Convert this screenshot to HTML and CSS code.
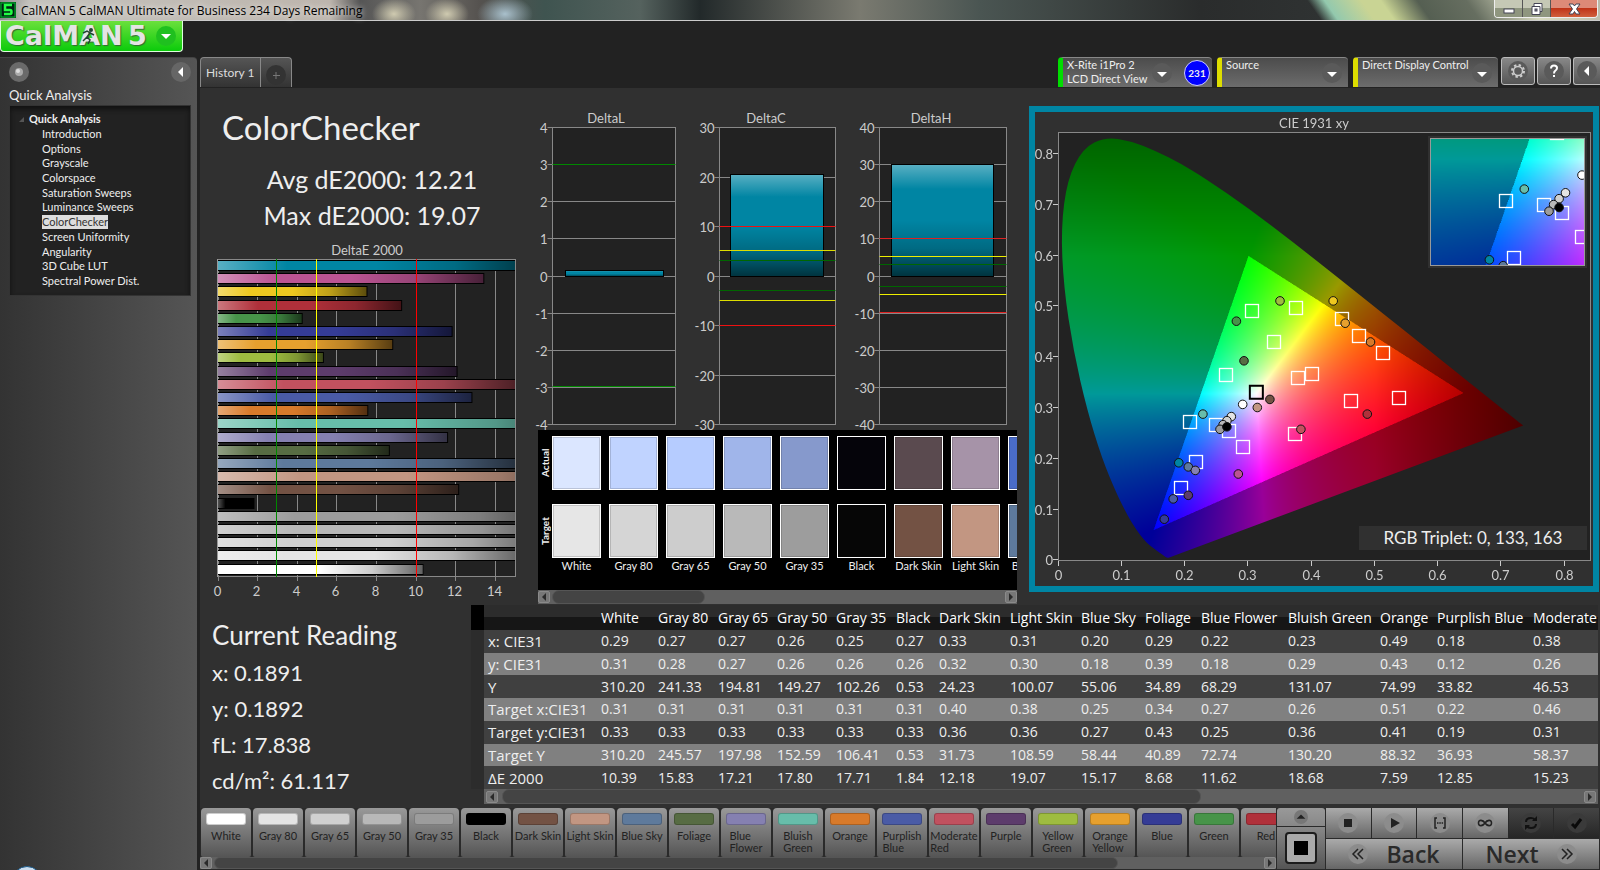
FILE: index.html
```html
<!DOCTYPE html>
<html lang="en">

<head>
    <meta charset="UTF-8">
    <meta name="viewport" content="width=device-width, initial-scale=1.0">
    <title>CalMAN 5</title>
    <link rel="stylesheet" href="styles.css">
</head>

<body>
    <header class="titlebar">
        <svg class="appicon" viewBox="0 0 16 16">
            <rect width="16" height="16" fill="#041" />
            <rect x="1" y="1" width="14" height="14" fill="#021" stroke="#0b3" />
            <path d="M12 3H5v5h5q1.500 0 1.500 2t-1.500 2H4" fill="none" stroke="#2f4" stroke-width="2.500" />
        </svg>
        <span class="caption">CalMAN 5 CalMAN Ultimate for Business 234 Days Remaining</span>
        <div class="winbtns">
            <button aria-label="Minimize"><svg viewBox="0 0 16 14"><rect x="3" y="7" width="10" height="4" fill="#fff" stroke="#445" /></svg></button>
            <button aria-label="Restore"><svg viewBox="0 0 16 14"><path d="M5 1.500h8v8h-2v3H3v-8h2z" fill="#fff" stroke="#445" /><rect x="6" y="7" width="2" height="2" fill="#889" stroke="#445" /><path d="M5 4.500h6v5" fill="none" stroke="#445" /></svg></button>
            <button class="close" aria-label="Close"><svg viewBox="0 0 16 14"><path d="M3 2h4l1.500 2L10 2h4l-3.500 5L14 12h-4L8.500 9.500 7 12H3l3.500-5z" fill="#fff" stroke="#445" /></svg></button>
        </div>
    </header>

    <div class="shell">
        <div class="left">
            <button class="brand">
                <svg class="logo" viewBox="0 0 150 30">
                    <text x="4" y="24">CalMAN</text>
                    <text x="127" y="24">5</text>
                    <!-- running man over the A -->
                    <circle cx="90" cy="9" r="2" fill="#243" />
                    <path d="M82 12l4-2 3 2-3 4 3 3-2 4M86 16l-4 4M89 12l4 2" fill="none" stroke="#243" stroke-width="1.500" />
                </svg>
                <svg class="round" viewBox="0 0 20 20"><circle cx="10" cy="10" r="10" fill="#1fc01f" /><path d="M5 8h10l-5 5z" fill="#fff" /></svg>
            </button>
            <aside class="sidebar">
                <div class="sidetop">
                    <svg viewBox="0 0 20 20"><circle cx="10" cy="10" r="10" fill="#6a6a6a" /><circle cx="10" cy="10" r="4" fill="#aaa" /><circle cx="9" cy="9" r="2" fill="#ddd" /></svg>
                    <button aria-label="Collapse"><svg viewBox="0 0 20 20"><circle cx="10" cy="10" r="10" fill="#666" /><path d="M12 5v10l-5-5z" fill="#fff" /></svg></button>
                </div>
                <h2>Quick Analysis</h2>
                <nav class="tree">
                    <div class="treehead"><svg viewBox="0 0 6 6"><path d="M6 0v6H0z" fill="#555" /></svg>Quick Analysis</div>
                    <ul>
                        <li><a href="#">Introduction</a></li>
                        <li><a href="#">Options</a></li>
                        <li><a href="#">Grayscale</a></li>
                        <li><a href="#">Colorspace</a></li>
                        <li><a href="#">Saturation Sweeps</a></li>
                        <li><a href="#">Luminance Sweeps</a></li>
                        <li><a href="#" class="on">ColorChecker</a></li>
                        <li><a href="#">Screen Uniformity</a></li>
                        <li><a href="#">Angularity</a></li>
                        <li><a href="#">3D Cube LUT</a></li>
                        <li><a href="#">Spectral Power Dist.</a></li>
                    </ul>
                </nav>
                <div class="orb"></div>
            </aside>
        </div>

        <div class="right">
            <div class="topbar">
                <div class="tabs">
                    <button class="tab">History 1</button>
                    <button class="tab add" aria-label="Add tab"><svg viewBox="0 0 20 20"><circle cx="10" cy="10" r="10" fill="#333" /><path d="M10 7v7M7 10.500h7" stroke="#777" /></svg></button>
                </div>
                <div class="devices">
                    <button class="device meter">
                        <span>X-Rite i1Pro 2<br>LCD Direct View</span>
                        <svg class="drop" viewBox="0 0 20 20"><circle cx="10" cy="10" r="10" fill="#5a5a5a" /><path d="M5 9h10l-5 5z" fill="#fff" /></svg>
                        <b class="count">231</b>
                    </button>
                    <button class="device source">
                        <span>Source</span>
                        <svg class="drop" viewBox="0 0 20 20"><circle cx="10" cy="10" r="10" fill="#5a5a5a" /><path d="M5 9h10l-5 5z" fill="#fff" /></svg>
                    </button>
                    <button class="device display">
                        <span>Direct Display Control</span>
                        <svg class="drop" viewBox="0 0 20 20"><circle cx="10" cy="10" r="10" fill="#5a5a5a" /><path d="M5 9h10l-5 5z" fill="#fff" /></svg>
                    </button>
                    <button class="tool" aria-label="Settings"><svg viewBox="0 0 20 20"><circle cx="10" cy="10" r="10" fill="#5a5a5a" /><circle cx="10" cy="10" r="4.500" fill="none" stroke="#ccc" stroke-width="1.500" /><circle cx="10" cy="10" r="6" fill="none" stroke="#ccc" stroke-width="2" stroke-dasharray="2.400 2.300" /></svg></button>
                    <button class="tool" aria-label="Help"><svg viewBox="0 0 20 20"><circle cx="10" cy="10" r="10" fill="#5a5a5a" /><path d="M7 7.500q0-3 3-3t3 2.500q0 1.500-1.500 2.500T10 12.500" fill="none" stroke="#fff" stroke-width="2" /><rect x="9" y="14" width="2" height="2" fill="#fff" /></svg></button>
                    <button class="tool cut" aria-label="Collapse right"><svg viewBox="0 0 20 20"><circle cx="10" cy="10" r="10" fill="#5a5a5a" /><path d="M12 5v10l-5-5z" fill="#fff" /></svg></button>
                </div>
            </div>

            <main class="workspace">
                <section class="upper">
                    <div class="summary">
                        <h1>ColorChecker</h1>
                        <p class="avg">Avg dE2000: 12.21<br>Max dE2000: 19.07</p>
                        <svg id="deltaE" viewBox="0 0 330 365"></svg>
                    </div>
                    <div class="middle">
                        <svg id="deltas" viewBox="0 0 499 330"></svg>
                        <div class="compare">
                            <div class="sides"><span>Actual</span><span>Target</span></div>
                            <div class="swatches" id="swatches"></div>
                        </div>
                        <div class="scroll swscroll"><button aria-label="Left"></button><i></i><button class="next" aria-label="Right"></button></div>
                    </div>
                    <div class="cie">
                        <canvas id="gamut" width="558" height="474"></canvas>
                        <svg id="ciexy" viewBox="0 0 558 474"></svg>
                    </div>
                </section>

                <section class="lower">
                    <div class="reading">
                        <h3>Current Reading</h3>
                        <p>x: 0.1891</p>
                        <p>y: 0.1892</p>
                        <p>fL: 17.838</p>
                        <p>cd/m²: 61.117</p>
                    </div>
                    <div class="data">
                        <div class="tablewrap">
                            <table id="values"></table>
                        </div>
                        <div class="scroll tbscroll"><button aria-label="Left"></button><i></i><button class="next" aria-label="Right"></button></div>
                    </div>
                </section>
            </main>

            <footer class="bottombar">
                <div class="patterns">
                    <div class="patternlist" id="patterns"></div>
                    <div class="scroll ptscroll"><button aria-label="Left"></button><i></i><button class="next" aria-label="Right"></button></div>
                </div>
                <div class="window">
                    <button aria-label="Expand"><svg viewBox="0 0 16 16"><circle cx="8" cy="8" r="8" fill="#777" /><path d="M3 10h10L8 5z" fill="#222" /></svg></button>
                    <button class="big" aria-label="Pattern window"><svg viewBox="0 0 32 32"><rect x="1" y="1" width="30" height="30" rx="3" fill="#aaa" stroke="#1c1c1c" stroke-width="2" /><rect x="9" y="9" width="14" height="14" fill="#000" /></svg></button>
                </div>
                <div class="controls">
                    <div class="ctlrow">
                        <button aria-label="Stop"><svg viewBox="0 0 20 20"><circle cx="10" cy="10" r="10" /><path d="M6 6h8v8H6z" fill="#222" /></svg></button>
                        <button aria-label="Play"><svg viewBox="0 0 20 20"><circle cx="10" cy="10" r="10" /><path d="M7 5l9 5-9 5z" fill="#222" /></svg></button>
                        <button aria-label="Read series"><svg viewBox="0 0 20 20"><circle cx="10" cy="10" r="10" /><path d="M7 5H5v10h2M13 5h2v10h-2M7 10h1.500M9.300 10h1.500M11.600 10h1.500" fill="none" stroke="#222" stroke-width="1.500" /></svg></button>
                        <button aria-label="Continuous"><svg viewBox="0 0 20 20"><circle cx="10" cy="10" r="10" /><path d="M10 10C8 7 3.500 6 3.500 10S8 13 10 10s6.500-4 6.500 0-4.500 3-6.500 0z" fill="none" stroke="#222" stroke-width="1.600" /></svg></button>
                        <button class="off" aria-label="Refresh" disabled><svg viewBox="0 0 20 20"><circle cx="10" cy="10" r="10" /><path d="M5 9q0-4 5-4 3 0 4 2M15 11q0 4-5 4-3 0-4-2" fill="none" stroke="#111" stroke-width="2" /><path d="M16 3v5h-5zM4 17v-5h5z" fill="#111" /></svg></button>
                        <button class="off" aria-label="Accept" disabled><svg viewBox="0 0 20 20"><circle cx="10" cy="10" r="10" /><path d="M5 11l3 3 6-8" fill="none" stroke="#0a0a0a" stroke-width="3" /></svg></button>
                    </div>
                    <div class="ctlrow nav">
                        <button><svg viewBox="0 0 20 20"><circle cx="10" cy="10" r="10" /><path d="M10 5l-5 5 5 5M15 5l-5 5 5 5" fill="none" stroke="#222" stroke-width="1.500" /></svg>Back</button>
                        <button>Next<svg viewBox="0 0 20 20"><circle cx="10" cy="10" r="10" /><path d="M5 5l5 5-5 5M10 5l5 5-5 5" fill="none" stroke="#222" stroke-width="1.500" /></svg></button>
                    </div>
                </div>
            </footer>
        </div>
    </div>
    <script src="script.js"></script>
</body>

</html>
```
FILE: styles.css
```css
/* reset */
html,
body {
    width: 100%;
    height: 100%
}

body,
p,
h1,
h2,
h3,
ul,
table,
th,
td,
button {
    margin: 0;
    padding: 0
}

* {
    box-sizing: border-box;
}

body {
    display: flex;
    flex-direction: column;
    overflow: hidden;
    background: #222;
    color: #eee;
}

body,
button {
    font-family: Lato, "Open Sans", sans-serif;
    font-size: 12px;
}

button {
    border: 0;
    color: inherit;
    display: flex;
    align-items: center;
    justify-content: center;
}

h1,
h2,
h3 {
    font-weight: normal;
}

ul {
    list-style: none
}

a {
    color: inherit;
    text-decoration: none
}

svg,
canvas {
    display: block;
}

/* window title */
.titlebar {
    flex: none;
    display: flex;
    align-items: center;
    height: 21px;
    border-bottom: 1px solid #ccc;
    background:
        radial-gradient(ellipse 22px 16px at 394px 14px, #cfcab0, transparent),
        radial-gradient(ellipse 22px 16px at 447px 14px, #cfcab0, transparent),
        radial-gradient(ellipse 28px 18px at 505px 14px, #a9c0cc, transparent),
        linear-gradient(55deg, transparent 0 calc(100% - 240px), #93c9ae calc(100% - 226px), #c9d494 calc(100% - 196px), #c9d494 calc(100% - 180px), #555f52 calc(100% - 150px), #666e60 calc(100% - 110px), #d8dac0 calc(100% - 60px), #b8b8a8 100%),
        linear-gradient(90deg, #888 0, #c4c2bc 30px, #bdb5ad 330px, #555 360px, #777570 420px, #55524f 480px, #3f5450 545px, #55625e 640px, #22292a 700px, #7a7a70 860px, #4a5552 980px, #2a2c2c 1200px, #3a4040 100%);
}

.appicon {
    width: 16px;
    height: 16px;
}

.caption {
    flex: 1;
    padding-left: 5px;
    color: #000;
    font-family: "Open Sans", sans-serif;
    font-size: 12px;
    text-shadow: 0 0 6px #fff;
}

.winbtns {
    display: flex;
    align-self: flex-start;
    height: 18px;
    margin-right: 2px;
    border: 1px solid #eee;
    border-top: 0;
    border-radius: 0 0 4px 4px;
    overflow: hidden;
}

.winbtns button {
    width: 28px;
    border-right: 1px solid #555;
    background: linear-gradient(#c5c8b5 50%, #8f967f 50%);
}

.winbtns .close {
    width: 46px;
    border: 0;
    background: linear-gradient(#dd8a78 45%, #c03418 50%, #d0603c);
}

.winbtns svg {
    width: 16px;
    height: 14px;
}

.shell {
    flex: 1;
    display: flex;
    min-height: 0;
}

/* left side */
.left {
    flex: none;
    display: flex;
    flex-direction: column;
    width: 200px;
}

.brand {
    width: 183px;
    height: 31px;
    margin-bottom: 5px;
    justify-content: flex-start;
    gap: 5px;
    border: 1px solid #dfd;
    border-top: 0;
    border-radius: 0 0 4px 4px;
    background: linear-gradient(#6be03c, #0bcb0b);
}

.logo {
    width: 150px;
    height: 30px;
    fill: #e4e4e4;
    font-family: "DejaVu Sans", sans-serif;
    font-size: 27px;
    font-weight: bold;
    text-shadow: 1px 1px 1px #363;
}

.round,
.drop,
.sidetop svg,
.add svg,
.tool svg {
    flex: none;
    width: 20px;
    height: 20px;
}

.sidebar {
    flex: 1;
    display: flex;
    flex-direction: column;
    width: 197px;
    padding: 4px 6px 0 9px;
    border-top: 1px solid #444;
    border-radius: 0 4px 0 0;
    background: linear-gradient(90deg, #333, #555);
    overflow: hidden;
}

.sidetop {
    display: flex;
    justify-content: space-between;
}

.sidetop button {
    background: none;
}

.sidebar h2 {
    margin: 6px 0 3px;
    font-size: 13px;
    line-height: 14px;
}

.tree {
    padding: 5px 0 7px 9px;
    border: 1px solid #333;
    background: #222;
    box-shadow: inset 0 3px 5px #111;
}

.treehead {
    display: flex;
    align-items: center;
    gap: 5px;
    font-size: 11px;
    font-weight: bold;
    line-height: 16px;
}

.treehead svg {
    width: 5px;
    height: 5px;
}

.tree ul {
    display: flex;
    flex-direction: column;
    justify-content: space-between;
    height: 161px;
    padding-left: 23px;
    font-size: 11px;
    line-height: 14px;
}

.tree a {
    display: inline-block;
}

.tree .on {
    color: #333;
    background: #ddd;
}

.orb {
    width: 30px;
    height: 30px;
    margin: auto 0 -26px 3px;
    flex: none;
    border: 1px solid #1a5a8a;
    border-radius: 50%;
    background: #cde;
}

.right {
    flex: 1;
    display: flex;
    flex-direction: column;
    min-width: 0;
}

/* tabs and device menus */
.topbar {
    flex: none;
    display: flex;
    justify-content: space-between;
    align-items: flex-end;
    height: 67px;
    padding-bottom: 1px;
}

.tabs,
.devices {
    display: flex;
}

.tab {
    height: 30px;
    padding: 0 5px;
    border: 1px solid #888;
    border-bottom: 0;
    border-radius: 4px 0 0 0;
    color: #ddd;
    font-size: 12px;
    background: linear-gradient(#555, #333);
}

.tab.add {
    padding: 4px 5px 0;
    border-left: 0;
    border-radius: 0 4px 0 0;
}

.devices {
    gap: 5px;
}

.device {
    height: 30px;
    padding: 0 6px 0 4px;
    border-top: 1px solid #888;
    border-left: 5px solid #dd0;
    border-radius: 4px 4px 0 0;
    justify-content: space-between;
    font-size: 11px;
    line-height: 14px;
    text-align: left;
    background: linear-gradient(#4c4c4c, #6c6c6c);
}

.device span {
    align-self: flex-start;
    white-space: nowrap;
}

.meter {
    width: 154px;
    padding-right: 2px;
    border-left-color: #0d0;
}

.source {
    width: 131px;
}

.display {
    width: 145px;
    margin-right: -2px;
}

.count {
    width: 26px;
    height: 26px;
    margin-left: 8px;
    border: 1px solid #ccf;
    border-radius: 50%;
    background: #00f;
    font-size: 10px;
    line-height: 24px;
    text-align: center;
}

.tool {
    width: 34px;
    height: 28px;
    margin-right: -3px;
    border: 1px solid #bbb;
    border-radius: 3px;
    background: linear-gradient(#888, #555);
}

.tool.cut {
    width: 27px;
    margin-right: 0;
    border-right: 0;
    border-radius: 3px 0 0 3px;
}

/* workspace */
.workspace {
    flex: 1;
    min-height: 0;
    padding-bottom: 3px;
    background: #303030;
    overflow: hidden;
}

.upper {
    display: grid;
    grid-template-columns: minmax(0, 330fr) minmax(0, 499fr) minmax(0, 571fr);
    align-items: start;
    height: 517px;
}

.summary h1 {
    padding: 18px 0 0 22px;
    font-size: 33px;
    line-height: 42px;
}

.avg {
    padding: 13px 0 7px 14px;
    font-size: 25px;
    line-height: 36px;
    text-align: center;
}

.middle {
    padding-top: 12px;
}

.upper svg {
    width: 100%;
    overflow: visible;
}

.lbl {
    fill: #ccc;
    font-size: 13px;
}

.mid {
    text-anchor: middle;
}

.end {
    text-anchor: end;
}

.plot {
    fill: #222;
    stroke: #888;
}

.compare {
    display: flex;
    height: 160px;
    margin: 0 12px 0 8px;
    background: #000;
}

.sides {
    flex: none;
    display: flex;
    flex-direction: column;
    width: 14px;
    padding-top: 6px;
    gap: 14px;
    font-size: 10px;
    font-weight: bold;
}

.sides span {
    height: 54px;
    line-height: 14px;
    text-align: center;
    writing-mode: vertical-rl;
    transform: rotate(180deg);
}

.swatches {
    flex: 1;
    display: flex;
    gap: 8px;
    padding-top: 6px;
    overflow: hidden;
}

.swatch {
    flex: none;
    width: 49px;
    font-size: 11px;
    line-height: 14px;
    text-align: center;
    white-space: nowrap;
}

.swatch i {
    display: block;
    height: 54px;
    margin-bottom: 14px;
    border: 1px solid #fff;
    box-shadow: inset 0 0 0 1px rgba(0, 0, 0, 0.150);
}

.swatch i+i {
    margin-bottom: 1px;
}

/* scroll bars */
.scroll {
    display: flex;
    align-items: center;
    justify-content: space-between;
    background: #606060;
}

.scroll button {
    flex: none;
    width: 12px;
    height: 12px;
    border: 1px solid #8a8a8a;
    border-radius: 2px;
    background: #777;
}

.scroll button::before {
    content: "";
    border: 4px solid transparent;
    border-left-width: 0;
    border-right-color: #2a2a2a;
}

.scroll .next::before {
    border-left-width: 4px;
    border-right-width: 0;
    border-left-color: #2a2a2a;
}

.scroll i {
    height: 100%;
    margin: 0 auto 0 2px;
    border: 1px solid #555;
    border-radius: 7px;
    background: #444;
}

.swscroll {
    height: 14px;
    margin: 0 12px 0 8px;
}

.swscroll i {
    width: 32%;
}

.tbscroll {
    height: 15px;
    margin-left: 13px;
    padding: 0 2px;
}

.tbscroll i {
    width: 63%;
    margin-left: 4px;
}

.ptscroll {
    height: 12px;
}

.ptscroll i {
    width: 84%;
}

/* CIE diagram */
.cie {
    display: grid;
    margin: 18px 1px 0 0;
    border: 6px solid #0085a3;
}

.cie canvas,
.cie svg {
    grid-area: 1 / 1;
    width: 100%;
}

.triplet {
    fill: #eee;
    font-size: 17px;
    text-anchor: middle;
}

/* reading and table */
.lower {
    display: flex;
}

.reading {
    flex: none;
    width: 271px;
    padding: 12px 0 0 12px;
    font-size: 22px;
    line-height: 36px;
}

.reading h3 {
    padding-bottom: 2px;
    font-size: 26px;
}

.data {
    flex: 1;
    min-width: 0;
    margin-right: 2px;
}

.tablewrap {
    overflow: hidden;
}

table {
    width: 1158px;
    height: 184px;
    table-layout: fixed;
    border-collapse: collapse;
    font-family: "Open Sans", sans-serif;
    font-size: 14px;
    line-height: 18px;
}

th,
td {
    padding: 0 0 0 4px;
    font-weight: normal;
    text-align: left;
    white-space: nowrap;
}

thead tr {
    height: 25px;
    background: linear-gradient(#2c2c2c 50%, #161616 50%);
}

thead th {
    color: #fff;
}

thead th:first-child {
    background: #000;
}

tbody tr {
    background: #404040;
}

tbody th {
    font-size: 15px;
}

tbody tr:nth-child(even) {
    background: #808080;
}

tbody td:first-child {
    background: #2c2c2c;
}

/* bottom bar */
.bottombar {
    flex: none;
    display: flex;
    gap: 1px;
    height: 62px;
    padding-bottom: 1px;
    background: #2a2a2a;
}

.patterns {
    flex: 1;
    min-width: 0;
}

.patternlist {
    display: flex;
    gap: 2px;
    padding-left: 1px;
    overflow: hidden;
}

.pattern {
    flex: none;
    flex-direction: column;
    justify-content: flex-start;
    width: 50px;
    height: 49px;
    padding-top: 5px;
    border-radius: 4px 4px 2px 2px;
    color: #222;
    font-size: 11px;
    line-height: 12px;
    text-align: left;
    background: linear-gradient(#999, #555);
}

.pattern i {
    width: 40px;
    height: 12px;
    margin-bottom: 5px;
    border: 1px solid rgba(0, 0, 0, 0.200);
    border-radius: 3px;
}

.window {
    flex: none;
    display: flex;
    flex-direction: column;
    gap: 1px;
    width: 48px;
}

.window button {
    height: 18px;
    border-radius: 3px 3px 0 0;
    background: linear-gradient(#999, #888);
}

.window .big {
    flex: 1;
    border-radius: 0;
    background: linear-gradient(#888, #555);
}

.window svg {
    width: 14px;
}

.window .big svg {
    width: 32px;
}

.controls {
    flex: none;
    display: flex;
    flex-direction: column;
    gap: 1px;
    width: 274px;
    padding-right: 1px;
}

.ctlrow {
    flex: 1;
    display: flex;
    gap: 1px;
}

.ctlrow button {
    flex: 1;
    background: linear-gradient(#aaa, #666);
}

.ctlrow .off {
    background: linear-gradient(#444, #262626);
}

.ctlrow svg {
    width: 20px;
    height: 20px;
    fill: #8c8c8c;
}

.ctlrow .off svg {
    fill: #3a3a3a;
}

.ctlrow.nav button {
    gap: 18px;
    color: #2a2a2a;
    font-family: "Open Sans", sans-serif;
    font-size: 23px;
    font-weight: 600;
    line-height: 28px;
}
```
FILE: script.js
```javascript
var names = ['White', 'Gray 80', 'Gray 65', 'Gray 50', 'Gray 35', 'Black', 'Dark Skin', 'Light Skin', 'Blue Sky',
    'Foliage', 'Blue Flower', 'Bluish Green', 'Orange', 'Purplish Blue', 'Moderate Red', 'Purple', 'Yellow Green',
    'Orange Yellow', 'Blue', 'Green', 'Red', 'Yellow', 'Magenta', 'Cyan'];
var colors = ['#ffffff', '#e4e4e4', '#d0d0d0', '#b8b8b8', '#9c9c9c', '#000000', '#735244', '#c29682', '#5e7a9c',
    '#576c43', '#8580b1', '#67bdaa', '#d87a2a', '#4a5ba6', '#c1515f', '#5d3c6c', '#9ebc40',
    '#e6a02e', '#353c96', '#479449', '#b0303a', '#eec820', '#bb5493', '#0085a3'];
var errors = [10.39, 15.83, 17.21, 17.8, 17.71, 1.84, 12.18, 19.07, 15.17, 8.68, 11.62, 18.68, 7.59, 12.85, 15.23,
    12.1, 5.35, 8.85, 11.85, 4.28, 9.3, 7.55, 13.45, 16];

function line(x1, y1, x2, y2, color) {
    return '<path d="M' + x1 + ' ' + y1 + 'L' + x2 + ' ' + y2 + '" stroke="' + color + '"/>';
}

function text(x, y, str, cls) {
    return '<text x="' + x + '" y="' + y + '" class="' + cls + '">' + str + '</text>';
}

function box(x, y, w, h, attrs) {
    return '<rect x="' + x + '" y="' + y + '" width="' + w + '" height="' + h + '" ' + attrs + '/>';
}

// glossy overlay, horizontal or vertical
function gloss(id, dir) {
    return '<linearGradient id="' + id + '" x1="0" y1="0" ' + dir + '>' +
        '<stop offset="0" stop-color="#fff" stop-opacity=".35"/><stop offset=".22" stop-color="#fff" stop-opacity="0"/>' +
        '<stop offset=".5" stop-color="#000" stop-opacity="0"/><stop offset=".75" stop-color="#000" stop-opacity=".2"/>' +
        '<stop offset="1" stop-color="#000" stop-opacity=".62"/></linearGradient>';
}

// DeltaE 2000 bars
function drawDeltaE() {
    var x0 = 17.5, unit = 19.8, out = gloss('glossH', 'x2="1" y2="0"');
    out += '<clipPath id="deClip"><rect x="17" y="19" width="298" height="318"/></clipPath>';
    out += text(167, 15, 'DeltaE 2000', 'lbl mid') + box(17.5, 19.5, 298, 317, 'class="plot"');
    for (var t = 0; t <= 14; t += 2) {
        var x = Math.round(x0 + t * unit) + 0.5;
        out += line(x, 19, x, 341, '#888') + text(x - 1, 356, t, 'lbl mid');
    }
    out += '<g clip-path="url(#deClip)">';
    for (var i = 0; i < 24; i++) {
        var y = Math.round(20 + i * 13.2) + 0.5;
        var w = errors[23 - i] * unit;
        out += box(x0, y, w, 10, 'fill="' + colors[23 - i] + '"') +
            box(x0, y, w, 10, 'fill="url(#glossH)" stroke="#000"');
    }
    out += '</g>' + line(17.5, 19, 17.5, 337, '#999');
    out += line(76.5, 19, 76.5, 337, '#080') + line(116.5, 19, 116.5, 337, '#ff0') + line(216.5, 19, 216.5, 337, '#f00');
    document.getElementById('deltaE').innerHTML = out;
}

// DeltaL, DeltaC, DeltaH
function drawDeltas() {
    var charts = [
        { name: 'DeltaL', x: 22.5, w: 123, max: 4, step: 1, value: 0.17, title: 76, bar: [35, 98], limits: [[3, '#080']] },
        { name: 'DeltaC', x: 189.5, w: 116, max: 30, step: 10, value: 20.6, title: 236, bar: [200, 93], limits: [[3, '#060'], [5, '#dd0'], [10, '#e11']] },
        { name: 'DeltaH', x: 349.5, w: 127, max: 40, step: 10, value: 30.2, title: 401, bar: [361, 102], limits: [[3, '#060'], [5, '#ee0'], [10, '#d22']] }
    ];
    var out = gloss('glossV', 'x2="0" y2="1"');
    charts.forEach(function (c) {
        var scale = 148.5 / c.max;
        out += text(c.title, 23, c.name, 'lbl mid') + box(c.x, 27.5, c.w, 297, 'class="plot"');
        for (var v = -c.max; v <= c.max; v += c.step) {
            var y = Math.floor(176 - v * scale) + 0.5;
            out += line(c.x - 5, y, c.x + c.w, y, '#888') + text(c.x - 5, y + 5, v, 'lbl end');
        }
        var h = Math.max(5, Math.round(c.value * scale));
        var top = 176.5 - h;
        out += box(c.bar[0] + 0.5, top, c.bar[1], h, 'fill="#0085a3"') +
            box(c.bar[0] + 0.5, top, c.bar[1], h, 'fill="url(#glossV)" stroke="#000"');
        c.limits.forEach(function (l) {
            [l[0], -l[0]].forEach(function (v) {
                var y = Math.round(176 - v * scale) - 0.5;
                out += line(c.x, y, c.x + c.w, y, l[1]);
            });
        });
    });
    document.getElementById('deltas').innerHTML = out;
}

// CIE 1931 diagram
var locus = [[.1741, .005], [.1726, .0048], [.1714, .0051], [.1689, .0069], [.1644, .0109], [.1566, .0177], [.144, .0297],
    [.1355, .0399], [.1241, .0578], [.1096, .0868], [.0913, .1327], [.0687, .2007], [.0454, .295], [.0235, .4127],
    [.0082, .5384], [.0039, .6548], [.0139, .7502], [.0389, .812], [.0743, .8338], [.1142, .8262], [.1547, .8059],
    [.1929, .7816], [.2296, .7543], [.3016, .6923], [.3731, .6245], [.4441, .5547], [.5125, .4866], [.5752, .4242],
    [.627, .3725], [.6658, .334], [.6915, .3083], [.719, .2809], [.7347, .2653]];
var targets = [[.263, .364], [.378, .359], [.4, .366], [.461, .314], [.537, .319], [.512, .408], [.207, .272],
    [.248, .266], [.268, .255], [.373, .248], [.29, .223], [.216, .194], [.193, .142], [.304, .491], [.375, .496],
    [.339, .43], [.447, .475], [.474, .442]];
// x, y and index into colors; black last so it stays on top
var actual = [[.29, .307, 0], [.272, .283, 1], [.265, .275, 2], [.259, .267, 3], [.254, .258, 4], [.333, .317, 6],
    [.313, .301, 7], [.204, .184, 8], [.292, .393, 9], [.215, .177, 10], [.227, .288, 11], [.492, .43, 12],
    [.18, .121, 13], [.382, .258, 14], [.204, .128, 15], [.349, .511, 16], [.452, .467, 17], [.166, .081, 18],
    [.28, .471, 19], [.487, .288, 20], [.433, .511, 21], [.283, .17, 22], [.189, .192, 23], [.265, .263, 5]];

function px(x) { return 23.5 + x * 632.5; }
function py(y) { return 448.3 - y * 507.7; }

function xyColor(x, y) {
    var X = x / y, Z = (1 - x - y) / y;
    var rgb = [3.2406 * X - 1.5372 - 0.4986 * Z, -0.9689 * X + 1.8758 + 0.0415 * Z, 0.0557 * X - 0.204 + 1.057 * Z];
    var inside = Math.min.apply(null, rgb) >= 0;
    var max = Math.max.apply(null, rgb);
    var level = inside ? 255 : 153;
    if (x > 0.5) level *= 1 - (x - 0.5) * 2.1;
    if (y > 0.6) level *= 1 - (y - 0.6) * 1.5;
    return rgb.map(function (c) { return Math.max(0, c / max) * level; });
}

function drawGamut() {
    var ctx = document.getElementById('gamut').getContext('2d');
    var off = document.createElement('canvas');
    off.width = 1116;
    off.height = 948;
    var octx = off.getContext('2d');
    var img = octx.createImageData(1116, 948);
    for (var j = 0; j < 948; j++) {
        for (var i = 0; i < 1116; i++) {
            var x = (i / 2 - 23.5) / 632.5, y = Math.max(0.001, (448.3 - j / 2) / 507.7);
            var c = xyColor(x, y), k = (j * 1116 + i) * 4;
            img.data[k] = c[0];
            img.data[k + 1] = c[1];
            img.data[k + 2] = c[2];
            img.data[k + 3] = 255;
        }
    }
    octx.putImageData(img, 0, 0);

    function paint() {
        ctx.beginPath();
        // curve through the midpoints to keep the outline smooth
        for (var n = 0; n < locus.length - 1; n++) {
            var a = locus[n], b = locus[n + 1];
            ctx.quadraticCurveTo(px(a[0]), py(a[1]), px((a[0] + b[0]) / 2), py((a[1] + b[1]) / 2));
        }
        ctx.lineTo(px(.7347), py(.2653));
        ctx.closePath();
        ctx.clip();
        ctx.drawImage(off, 0, 0, 558, 474);
    }

    ctx.fillStyle = '#222';
    ctx.fillRect(23, 21, 533, 428);
    ctx.save();
    paint();
    ctx.restore();
    ctx.fillStyle = '#303030';
    ctx.fillRect(393, 24, 159, 132);
    ctx.save();
    ctx.beginPath();
    ctx.rect(395, 26, 155, 128);
    ctx.clip();
    ctx.transform(1.45, 0, 0, 1.45, 246.85, -360.9);
    paint();
    ctx.restore();
}

function markers(fx, fy) {
    var out = '';
    targets.forEach(function (t) {
        out += box(Math.round(fx(t[0])) - 6.5, Math.round(fy(t[1])) - 6.5, 13, 13, 'fill="none" stroke="#fff" stroke-width="1.3"');
    });
    actual.forEach(function (a) {
        out += '<circle cx="' + fx(a[0]).toFixed(1) + '" cy="' + fy(a[1]).toFixed(1) + '" r="4.300" fill="' + colors[a[2]] + '" stroke="#111"/>';
    });
    return out;
}

function drawCie() {
    var out = '<clipPath id="inset"><rect x="395" y="26" width="155" height="128"/></clipPath>';
    out += text(279, 16, 'CIE 1931 xy', 'lbl mid');
    out += box(23.5, 20.5, 532, 428, 'fill="none" stroke="#888"');
    for (var t = 0; t <= 8; t++) {
        var x = Math.round(px(t / 10)) - 0.5, y = Math.round(py(t / 10)) - 0.5;
        var label = t ? '0.' + t : '0';
        out += line(x, 449, x, 454, '#ccc') + text(x, 468, label, 'lbl mid');
        out += line(18, y, 23, y, '#ccc') + text(18, y + 5, label, 'lbl end');
    }
    out += markers(function (x) { return px(x) + 0.8; }, py);
    out += box(px(.312) - 6, py(.331) - 6.5, 13, 13, 'fill="none" stroke="#000" stroke-width="2"');
    out += '<g clip-path="url(#inset)">' + markers(
        function (x) { return px(x) * 1.45 + 247; },
        function (y) { return py(y) * 1.45 - 360.9; }) + '</g>';
    out += box(395.5, 26.5, 154, 127, 'fill="none" stroke="#999"');
    out += box(324, 414, 228, 24, 'fill="#303030"') + text(438, 432, 'RGB Triplet: 0, 133, 163', 'triplet');
    document.getElementById('ciexy').innerHTML = out;
}

// actual / target swatches
function drawSwatches() {
    var act = ['#dbe6ff', '#c0d3ff', '#b6ccff', '#a0b5ea', '#8699cc', '#05040a', '#5a4a4f', '#a693a8', '#4a6cc8'];
    var tgt = ['#e6e6e6', '#d5d5d5', '#cdcdcd', '#b9b9b9', '#9d9d9d', '#060606', '#735244', '#c29682', '#5e7a9c'];
    document.getElementById('swatches').innerHTML = act.map(function (c, i) {
        return '<div class="swatch"><i style="background:' + c + '"></i><i style="background:' + tgt[i] + '"></i>' + names[i] + '</div>';
    }).join('');
}

function drawTable() {
    var widths = [13, 113, 57, 60, 59, 59, 60, 43, 71, 71, 64, 56, 87, 92, 57, 96, 100];
    var rows = [
        ['x: CIE31', '0.29 0.27 0.27 0.26 0.25 0.27 0.33 0.31 0.20 0.29 0.22 0.23 0.49 0.18 0.38'],
        ['y: CIE31', '0.31 0.28 0.27 0.26 0.26 0.26 0.32 0.30 0.18 0.39 0.18 0.29 0.43 0.12 0.26'],
        ['Y', '310.20 241.33 194.81 149.27 102.26 0.53 24.23 100.07 55.06 34.89 68.29 131.07 74.99 33.82 46.53'],
        ['Target x:CIE31', '0.31 0.31 0.31 0.31 0.31 0.31 0.40 0.38 0.25 0.34 0.27 0.26 0.51 0.22 0.46'],
        ['Target y:CIE31', '0.33 0.33 0.33 0.33 0.33 0.33 0.36 0.36 0.27 0.43 0.25 0.36 0.41 0.19 0.31'],
        ['Target Y', '310.20 245.57 197.98 152.59 106.41 0.53 31.73 108.59 58.44 40.89 72.74 130.20 88.32 36.93 58.37'],
        ['ΔE 2000', '10.39 15.83 17.21 17.80 17.71 1.84 12.18 19.07 15.17 8.68 11.62 18.68 7.59 12.85 15.23']
    ];
    var out = '<colgroup>' + widths.map(function (w) { return '<col style="width:' + w + 'px">'; }).join('') + '</colgroup>';
    out += '<thead><tr><th></th><th></th><th>' + names.slice(0, 15).join('</th><th>') + '</th></tr></thead><tbody>';
    rows.forEach(function (r) {
        out += '<tr><td></td><th>' + r[0] + '</th><td>' + r[1].split(' ').join('</td><td>') + '</td></tr>';
    });
    document.getElementById('values').innerHTML = out + '</tbody>';
}

function drawPatterns() {
    document.getElementById('patterns').innerHTML = names.slice(0, 21).map(function (n, i) {
        var label = i > 9 ? n.replace(' ', '<br>') : n;
        return '<button class="pattern"><i style="background:' + colors[i] + '"></i><span>' + label + '</span></button>';
    }).join('');
}

drawDeltaE();
drawDeltas();
drawGamut();
drawCie();
drawSwatches();
drawTable();
drawPatterns();
```
